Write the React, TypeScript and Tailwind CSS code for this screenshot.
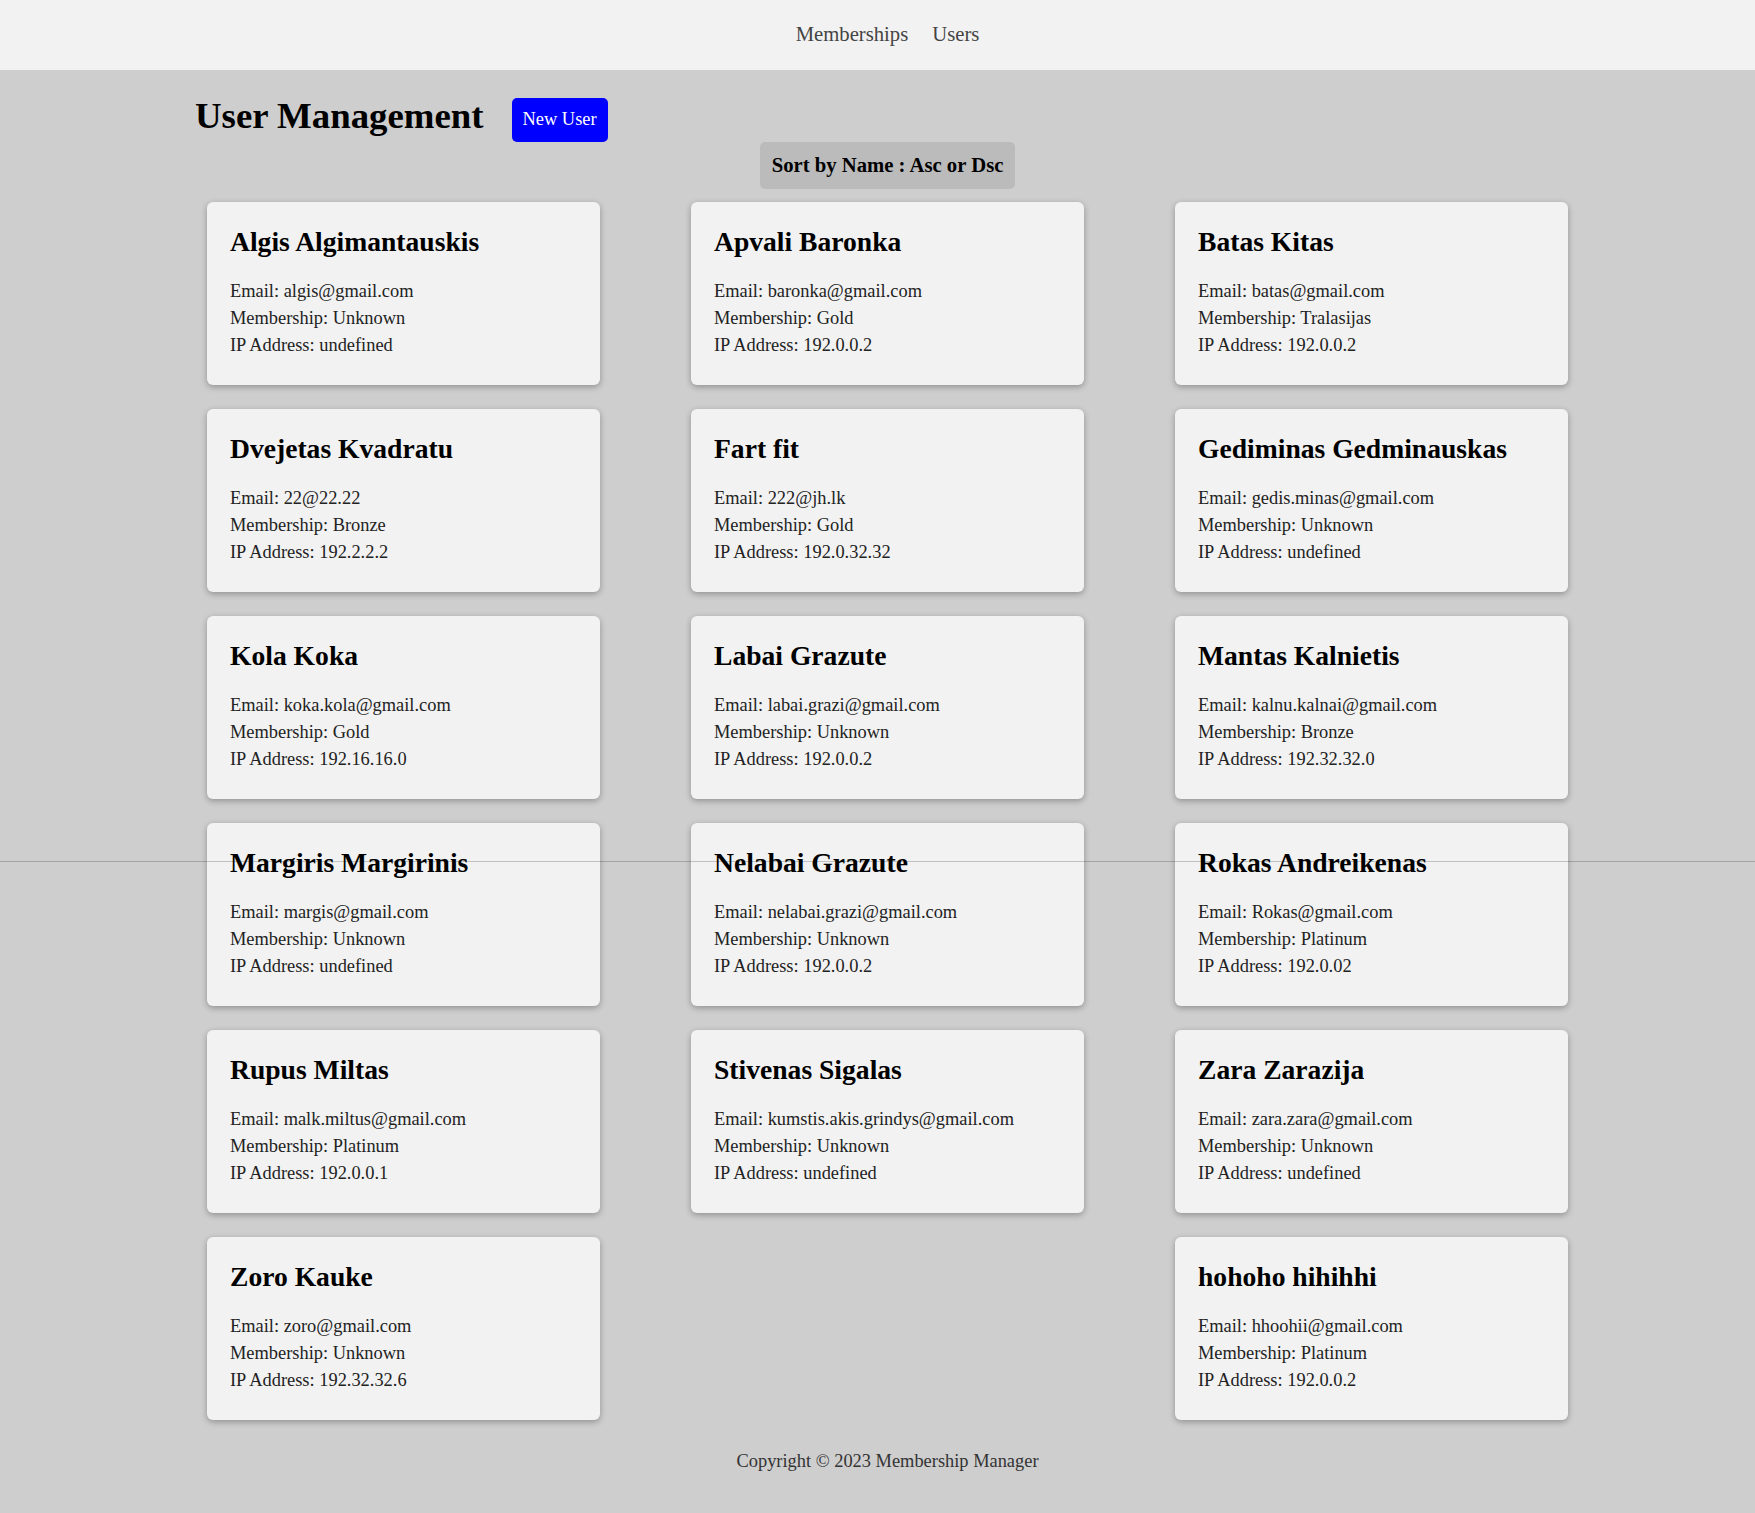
import React from "react";

type User = { name: string; email: string; membership: string; ip: string };

const users: (User | null)[] = [
  { name: "Algis Algimantauskis", email: "algis@gmail.com", membership: "Unknown", ip: "undefined" },
  { name: "Apvali Baronka", email: "baronka@gmail.com", membership: "Gold", ip: "192.0.0.2" },
  { name: "Batas Kitas", email: "batas@gmail.com", membership: "Tralasijas", ip: "192.0.0.2" },
  { name: "Dvejetas Kvadratu", email: "22@22.22", membership: "Bronze", ip: "192.2.2.2" },
  { name: "Fart fit", email: "222@jh.lk", membership: "Gold", ip: "192.0.32.32" },
  { name: "Gediminas Gedminauskas", email: "gedis.minas@gmail.com", membership: "Unknown", ip: "undefined" },
  { name: "Kola Koka", email: "koka.kola@gmail.com", membership: "Gold", ip: "192.16.16.0" },
  { name: "Labai Grazute", email: "labai.grazi@gmail.com", membership: "Unknown", ip: "192.0.0.2" },
  { name: "Mantas Kalnietis", email: "kalnu.kalnai@gmail.com", membership: "Bronze", ip: "192.32.32.0" },
  { name: "Margiris Margirinis", email: "margis@gmail.com", membership: "Unknown", ip: "undefined" },
  { name: "Nelabai Grazute", email: "nelabai.grazi@gmail.com", membership: "Unknown", ip: "192.0.0.2" },
  { name: "Rokas Andreikenas", email: "Rokas@gmail.com", membership: "Platinum", ip: "192.0.02" },
  { name: "Rupus Miltas", email: "malk.miltus@gmail.com", membership: "Platinum", ip: "192.0.0.1" },
  { name: "Stivenas Sigalas", email: "kumstis.akis.grindys@gmail.com", membership: "Unknown", ip: "undefined" },
  { name: "Zara Zarazija", email: "zara.zara@gmail.com", membership: "Unknown", ip: "undefined" },
  { name: "Zoro Kauke", email: "zoro@gmail.com", membership: "Unknown", ip: "192.32.32.6" },
  null,
  { name: "hohoho hihihhi", email: "hhoohii@gmail.com", membership: "Platinum", ip: "192.0.0.2" },
];

function Card({ u }: { u: User }) {
  return (
    <div className="h-[183px] rounded-md bg-[#f2f2f2] px-[23px] pt-[24px] shadow-[0_2px_6px_rgba(0,0,0,0.3)]">
      <h2 className="text-[27.6px] font-bold leading-[31px] text-black">{u.name}</h2>
      <div className="mt-[21px] text-[18.4px] leading-[27px] text-[#222]">
        <p>Email: {u.email}</p>
        <p>Membership: {u.membership}</p>
        <p>IP Address: {u.ip}</p>
      </div>
    </div>
  );
}

export default function App() {
  return (
    <div
      className="relative min-h-[1513px] bg-[#cecece]"
      style={{ fontFamily: '"Liberation Serif", "Times New Roman", serif' }}
    >
      <header className="flex h-[70px] items-center justify-center bg-[#f2f2f2] pl-[20px]">
        <nav className="flex gap-[24px] text-[20.7px] text-[#444]">
          <span>Memberships</span>
          <span>Users</span>
        </nav>
      </header>

      <main className="pl-[20px]">
        <div className="mx-auto w-[1385px] pt-[25px]">
          <div className="flex items-start gap-[28px]">
            <h1 className="text-[36.8px] font-bold leading-[41px] text-black">User Management</h1>
            <button className="mt-[3px] h-[44px] rounded-[5px] bg-[#0000ff] px-[11px] text-[18.4px] text-white">
              New User
            </button>
          </div>
          <div className="flex justify-center">
            <button className="h-[47px] rounded-[5px] bg-[#bbbbbb] px-[12px] text-[20.7px] font-bold text-black">
              Sort by Name : Asc or Dsc
            </button>
          </div>
          <div className="mt-[13px] grid grid-cols-[393px_393px_393px] gap-x-[91px] gap-y-[24px] px-[12px]">
            {users.map((u, i) => (u ? <Card key={i} u={u} /> : <div key={i} />))}
          </div>
          <footer className="mt-[28px] pb-[37px] text-center text-[18.4px] leading-[27px] text-[#333]">
            Copyright © 2023 Membership Manager
          </footer>
        </div>
      </main>

      <div className="pointer-events-none absolute left-0 right-0 top-[861px] h-px bg-black/20" />
    </div>
  );
}
